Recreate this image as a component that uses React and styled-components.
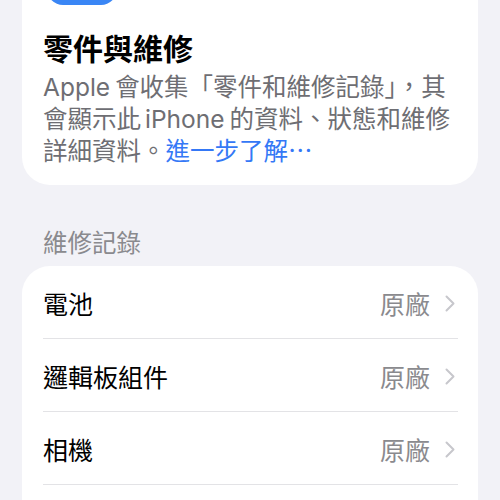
import React from "react";
import styled, { createGlobalStyle } from "styled-components";

const Global = createGlobalStyle`
  html, body { margin: 0; padding: 0; background: #f2f2f7; }
  body { font-family: "Inter", "Noto Sans CJK TC", sans-serif; -webkit-font-smoothing: antialiased; }
`;

const Page = styled.div`
  width: 500px;
  height: 500px;
  overflow: hidden;
  background: #f2f2f7;
`;

const Scroller = styled.div`
  margin-top: -92px;
  padding: 0 22px;
  display: flex;
  flex-direction: column;
`;

const InfoCard = styled.div`
  background: #fff;
  border-radius: 28px;
  padding: 27px 21px 18px;
  display: flex;
  flex-direction: column;
`;

const AppIcon = styled.div`
  width: 70px;
  height: 70px;
  margin-left: 4px;
  border-radius: 16px;
  background: #3a86f5;
`;

const Title = styled.h1`
  margin: 24px 0 0;
  font-size: 30px;
  line-height: 36px;
  font-weight: 700;
  color: #000;
  font-family: "Noto Sans CJK TC", sans-serif;
`;

const Desc = styled.p`
  margin: 6px 0 0;
  font-size: 24.5px;
  line-height: 32px;
  color: #6e6e73;
  white-space: nowrap;
`;

const Latin = styled.span`
  margin-right: ${(p) => p.$gap || 0}px;
  margin-left: ${(p) => p.$lgap || 0}px;
`;

const Link = styled.span`
  color: #3478f6;
`;

const SectionHeader = styled.div`
  margin: 42px 0 0 21px;
  font-size: 24.5px;
  line-height: 32px;
  color: #8a8a8e;
`;

const ListCard = styled.div`
  margin-top: 7px;
  padding-bottom: 60px;
  background: #fff;
  border-radius: 28px;
  display: flex;
  flex-direction: column;
`;

const Row = styled.div`
  height: 73px;
  display: flex;
  align-items: center;
  padding: 1px 23px 0 21px;
  box-sizing: border-box;
  position: relative;
  &::after {
    content: "";
    position: absolute;
    left: 21px;
    right: 20px;
    bottom: 0;
    height: 1px;
    background: #e3e3e6;
  }
`;

const Label = styled.span`
  flex: 1;
  font-size: 25px;
  color: #000;
`;

const Value = styled.span`
  font-size: 25px;
  color: #8a8a8e;
  margin-right: 15px;
`;

const Chevron = () => (
  <svg width="10" height="17" viewBox="0 0 10 17" fill="none">
    <path d="M1.5 1.5 L8.5 8.5 L1.5 15.5" stroke="#c7c7cc" strokeWidth="2" strokeLinecap="round" strokeLinejoin="round" />
  </svg>
);

const rows = ["電池", "邏輯板組件", "相機"];

export default function App() {
  return (
    <Page>
      <Global />
      <Scroller>
        <InfoCard>
          <AppIcon />
          <Title>零件與維修</Title>
          <Desc>
            <Latin $gap={5}>Apple</Latin>會收集「零件和維修記錄」，其
            <br />
            會顯示此<Latin $gap={5} $lgap={4}>iPhone</Latin>的資料、狀態和維修
            <br />
            詳細資料。<Link>進一步了解⋯</Link>
          </Desc>
        </InfoCard>
        <SectionHeader>維修記錄</SectionHeader>
        <ListCard>
          {rows.map((r) => (
            <Row key={r}>
              <Label>{r}</Label>
              <Value>原廠</Value>
              <Chevron />
            </Row>
          ))}
        </ListCard>
      </Scroller>
    </Page>
  );
}
